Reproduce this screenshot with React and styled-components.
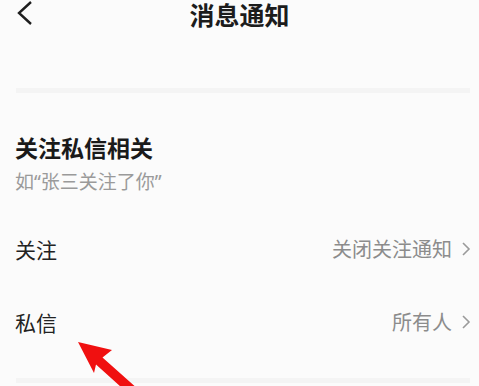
import React from "react";
import styled, { createGlobalStyle } from "styled-components";

const GlobalStyle = createGlobalStyle`
    html, body {
        margin: 0;
        padding: 0;
        background: #fbfbfb;
    }
    body {
        font-family: "Noto Sans CJK SC", "Noto Sans", sans-serif;
    }
`;

const Page = styled.div`
    position: relative;
    width: 479px;
    height: 386px;
    overflow: hidden;
    background: #fbfbfb;
`;

const Header = styled.div`
    position: relative;
    height: 28px;
    display: flex;
    align-items: center;
    justify-content: center;
`;

const BackButton = styled.div`
    position: absolute;
    left: 14px;
    top: 0;
    width: 24px;
    height: 28px;
    display: flex;
    align-items: center;
`;

const Title = styled.h1`
    margin: 0;
    font-size: 25px;
    line-height: 28px;
    font-weight: 700;
    color: #1c1c1c;
`;

const Divider = styled.div`
    height: 5px;
    margin: ${(p) => p.$top}px 9px 0 16px;
    background: #f4f4f4;
`;

const Section = styled.div`
    padding: 39px 0 0 15px;
`;

const SectionTitle = styled.div`
    font-size: 23px;
    line-height: 30px;
    font-weight: 700;
    color: #1a1a1a;
`;

const SectionHint = styled.div`
    margin-top: 7px;
    font-family: "Noto Sans", "Noto Sans CJK SC", sans-serif;
    font-size: 19px;
    line-height: 26px;
    color: #9a9a9a;
`;

const List = styled.div`
    margin-top: 17px;
`;

const Row = styled.div`
    height: 73px;
    display: flex;
    align-items: center;
    justify-content: space-between;
    padding-right: 7px;
`;

const Label = styled.span`
    font-size: 21px;
    color: #222;
`;

const Value = styled.span`
    display: flex;
    align-items: center;
    gap: 9px;
    font-size: 20px;
    color: #8c8c8c;
`;

const Pointer = styled.svg`
    position: absolute;
    left: 0;
    top: 0;
    pointer-events: none;
`;

function Chevron() {
    return (
        <svg width="11" height="16" viewBox="0 0 11 16">
            <polyline points="2,2 8,8 2,14" fill="none" stroke="#9a9a9a" strokeWidth="1.6" />
        </svg>
    );
}

const rows = [
    { label: "关注", value: "关闭关注通知" },
    { label: "私信", value: "所有人" },
];

export default function App() {
    return (
        <Page>
            <GlobalStyle />
            <Header>
                <BackButton>
                    <svg width="20" height="26" viewBox="0 0 20 26">
                        <polyline points="17,1 5,12 17,23" fill="none" stroke="#1e1e1e" strokeWidth="2.4" />
                    </svg>
                </BackButton>
                <Title>消息通知</Title>
            </Header>
            <Divider $top={60} />
            <Section>
                <SectionTitle>关注私信相关</SectionTitle>
                <SectionHint>如“张三关注了你”</SectionHint>
                <List>
                    {rows.map((r) => (
                        <Row key={r.label}>
                            <Label>{r.label}</Label>
                            <Value>
                                {r.value}
                                <Chevron />
                            </Value>
                        </Row>
                    ))}
                </List>
            </Section>
            <Divider $top={20} />
            <Pointer width="479" height="386" viewBox="0 0 479 386">
                <polygon
                    points="78,342 112,350 102.5,357.5 148,398 141,405 96,364.5 94,373"
                    fill="#f01010"
                />
            </Pointer>
        </Page>
    );
}
